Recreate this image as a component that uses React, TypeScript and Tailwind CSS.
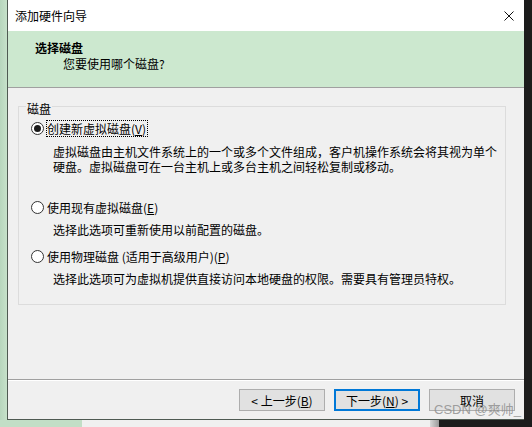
import React from "react";

function Radio({ checked }: { checked?: boolean }) {
  return (
    <span className="w-[13px] h-[13px] rounded-full border border-[#333333] bg-white flex items-center justify-center shrink-0">
      {checked && <span className="w-[7px] h-[7px] rounded-full bg-[#1a1a1a]" />}
    </span>
  );
}

function Btn({ children, focused }: { children: React.ReactNode; focused?: boolean }) {
  return (
    <div
      className={
        focused
          ? "w-[86px] h-[22px] border-2 border-[#0078d7] bg-[#e1e1e1] flex items-center justify-center text-[12px] leading-[15px] text-black"
          : "w-[86px] h-[22px] border border-[#adadad] bg-[#e1e1e1] flex items-center justify-center text-[12px] leading-[15px] text-black"
      }
    >
      {children}
    </div>
  );
}

export default function App() {
  return (
    <div className="relative w-[532px] h-[427px] overflow-hidden bg-[#1c1c1c] font-['Noto_Sans_CJK_SC','Noto_Sans',sans-serif] text-[12px] leading-[15px] text-black">
      {/* desktop background pieces */}
      <div className="absolute left-0 top-0 w-[8px] h-full bg-gradient-to-r from-[#b7d6bd] to-[#c9e3cc]" />
      <div className="absolute left-0 top-[420px] w-[82px] h-[7px] bg-[#c2dec6]" />
      <div className="absolute left-[82px] top-[420px] w-[348px] h-[7px] bg-[#f0f0f0]" />
      <div className="absolute left-[430px] top-[420px] w-[9px] h-[7px] bg-gradient-to-r from-[#d8d8d8] to-[#9a9a9a]" />

      {/* window */}
      <div className="absolute left-[7px] top-0 w-[517px] h-[420px] flex flex-col border-l border-b border-[#4f5a52] bg-[#f0f0f0]">
        {/* title bar */}
        <div className="h-[31px] bg-white flex items-center justify-between pl-[7px] pr-[10px] shrink-0">
          <span>添加硬件向导</span>
          <svg width="10" height="10" viewBox="0 0 10 10" className="block">
            <path d="M0.5 0.5 L9.5 9.5 M9.5 0.5 L0.5 9.5" stroke="#111" strokeWidth="1" fill="none" />
          </svg>
        </div>

        {/* header */}
        <div className="h-[57px] shrink-0 bg-[#cce8cf] border-b border-[#a0a0a0] pl-[27px] pt-[9px] flex flex-col">
          <div className="font-bold">选择磁盘</div>
          <div className="mt-[1px] pl-[28px]">您要使用哪个磁盘?</div>
        </div>

        {/* content */}
        <div className="flex-1 flex flex-col">
          <div className="relative mt-[18px] ml-[10px] w-[488px] h-[199px] border border-[#dcdcdc] flex flex-col pt-[13px] whitespace-nowrap">
            <span className="absolute left-[7px] top-[-6px] px-[1px] bg-[#f0f0f0]">磁盘</span>

            <div className="flex items-center pl-[12px]">
              <Radio checked />
              <span className="ml-[2px] border border-dotted border-black pr-[1px]">
                创建新虚拟磁盘(<span className="underline">V</span>)
              </span>
            </div>
            <div className="pl-[34px] mt-[7px]">
              <div>虚拟磁盘由主机文件系统上的一个或多个文件组成，客户机操作系统会将其视为单个</div>
              <div>硬盘。虚拟磁盘可在一台主机上或多台主机之间轻松复制或移动。</div>
            </div>

            <div className="flex items-center pl-[12px] mt-[25px]">
              <Radio />
              <span className="ml-[2px] border border-transparent pr-[1px]">
                使用现有虚拟磁盘(<span className="underline">E</span>)
              </span>
            </div>
            <div className="pl-[34px] mt-[6px]">选择此选项可重新使用以前配置的磁盘。</div>

            <div className="flex items-center pl-[12px] mt-[11px]">
              <Radio />
              <span className="ml-[2px] border border-transparent pr-[1px]">
                使用物理磁盘 (适用于高级用户)(<span className="underline">P</span>)
              </span>
            </div>
            <div className="pl-[34px] mt-[6px]">选择此选项可为虚拟机提供直接访问本地硬盘的权限。需要具有管理员特权。</div>
          </div>
        </div>

        {/* separator */}
        <div className="h-[2px] shrink-0 border-t border-[#a0a0a0] border-b border-b-white" />

        {/* footer */}
        <div className="h-[38px] shrink-0 flex justify-end gap-[9px] pr-[9px] pt-[8px]">
          <Btn>
            &lt; 上一步(<span className="underline">B</span>)
          </Btn>
          <Btn focused>
            下一步(<span className="underline">N</span>) &gt;
          </Btn>
          <Btn>取消</Btn>
        </div>
      </div>

      {/* watermark */}
      <div className="absolute left-[434px] top-[402px] text-[13px] leading-[16px] text-[#8a8a8a]/80 font-['Liberation_Sans','Noto_Sans_CJK_SC',sans-serif] whitespace-nowrap">
        CSDN @爽帅_
      </div>
    </div>
  );
}
